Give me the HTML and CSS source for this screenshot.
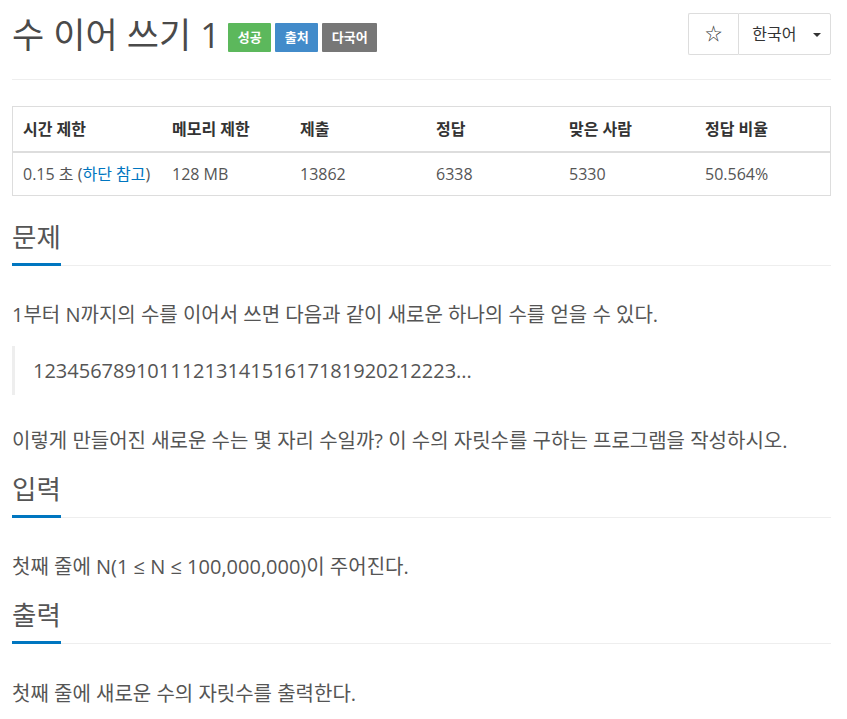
FILE: index.html
```html
<!doctype html>
<html lang="ko">
<head>
    <meta charset="UTF-8">
    <title>수 이어 쓰기 1</title>
    <link rel="stylesheet" href="styles.css">
</head>
<body>
    <div class="container">
        <div class="page-header">
            <h1 class="title">
                <span class="title-text">수 이어 쓰기 1</span>
                <span class="label label-success">성공</span>
                <span class="label label-primary">출처</span>
                <span class="label label-default">다국어</span>
            </h1>
            <div class="btn-group">
                <button class="btn btn-star">&#9734;</button>
                <button class="btn btn-lang">한국어 <span class="caret"></span></button>
            </div>
        </div>

        <table class="problem-info">
            <thead>
                <tr>
                    <th>시간 제한</th>
                    <th>메모리 제한</th>
                    <th>제출</th>
                    <th>정답</th>
                    <th>맞은 사람</th>
                    <th>정답 비율</th>
                </tr>
            </thead>
            <tbody>
                <tr>
                    <td>0.15 초 (<a href="#">하단 참고</a>)</td>
                    <td>128 MB</td>
                    <td>13862</td>
                    <td>6338</td>
                    <td>5330</td>
                    <td>50.564%</td>
                </tr>
            </tbody>
        </table>

        <section class="problem-section">
            <div class="headline"><h2>문제</h2></div>
            <div class="problem-text">
                <p>1부터 N까지의 수를 이어서 쓰면 다음과 같이 새로운 하나의 수를 얻을 수 있다.</p>
                <blockquote>1234567891011121314151617181920212223...</blockquote>
                <p>이렇게 만들어진 새로운 수는 몇 자리 수일까? 이 수의 자릿수를 구하는 프로그램을 작성하시오.</p>
            </div>
        </section>

        <section class="problem-section">
            <div class="headline"><h2>입력</h2></div>
            <div class="problem-text">
                <p>첫째 줄에 N(1 &le; N &le; 100,000,000)이 주어진다.</p>
            </div>
        </section>

        <section class="problem-section">
            <div class="headline"><h2>출력</h2></div>
            <div class="problem-text">
                <p>첫째 줄에 새로운 수의 자릿수를 출력한다.</p>
            </div>
        </section>
    </div>
</body>
</html>
```

FILE: styles.css
```css
body {
    margin: 0;
    background-color: #fff;
    color: #555;
    font: 15px/1.42857 "Open Sans", "Noto Sans CJK KR", sans-serif;
}

.container {
    padding: 0 16px 0 12px;
}

.page-header {
    display: flex;
    justify-content: space-between;
    align-items: flex-start;
    padding-top: 13px;
    height: 66px;
    border-bottom: 1px solid #eee;
    margin-bottom: 26px;
}

.title {
    margin: 0;
    padding-top: 2px;
    display: flex;
    align-items: center;
    font-size: 35px;
    font-weight: 400;
    line-height: 40px;
    color: #4a4a4a;
}

.title-text {
    margin-right: 8px;
}

.label {
    display: inline-block;
    height: 29px;
    line-height: 29px;
    margin-right: 4px;
    margin-top: 4px;
    font-size: 13px;
    font-weight: 700;
    text-align: center;
    color: #fff;
    border-radius: 1px;
    box-sizing: border-box;
}

.label-success {
    background-color: #5cb85c;
    width: 43px;
}

.label-primary {
    background-color: #428bca;
    width: 43px;
}

.label-default {
    background-color: #777;
    width: 55px;
}

.btn-group {
    display: flex;
    height: 42px;
}

.btn {
    font: inherit;
    background: #fff;
    border: 1px solid #ddd;
    color: #333;
    height: 42px;
    margin: 0;
    cursor: pointer;
}

.btn-star {
    width: 50px;
    font-size: 17px;
    border-right: 0;
    border-radius: 2px 0 0 2px;
}

.btn-lang {
    width: 93px;
    font-size: 16px;
    border-radius: 0 2px 2px 0;
    padding: 0 0 0 4px;
}

.caret {
    display: inline-block;
    width: 0;
    height: 0;
    margin-left: 12px;
    vertical-align: middle;
    border-top: 4px solid #333;
    border-left: 4px solid transparent;
    border-right: 4px solid transparent;
}

.problem-info {
    width: 100%;
    border-collapse: collapse;
    border: 1px solid #ddd;
    table-layout: fixed;
    margin-bottom: 24px;
}

.problem-info th,
.problem-info td {
    text-align: left;
    padding: 0 10px;
    font-size: 16px;
    color: #333;
    white-space: nowrap;
}

.problem-info th {
    height: 44px;
    font-weight: 700;
    border-bottom: 2px solid #ddd;
}

.problem-info td {
    height: 42px;
    color: #555;
}

.problem-info th:nth-child(1) { width: 129px; }
.problem-info th:nth-child(2) { width: 108px; }
.problem-info th:nth-child(3) { width: 116px; }
.problem-info th:nth-child(4) { width: 113px; }
.problem-info th:nth-child(5) { width: 116px; }

a {
    color: #0076c0;
    text-decoration: none;
}

.headline {
    border-bottom: 1px solid #eee;
    margin-bottom: 34px;
}

.headline h2 {
    display: inline-block;
    margin: 0 0 -1px;
    padding-bottom: 9px;
    font-size: 26.5px;
    font-weight: 400;
    line-height: 34px;
    color: #555;
    border-bottom: 3px solid #0076c0;
}

.problem-text p {
    margin: 0 0 16px;
    font-size: 20px;
    line-height: 30px;
}

.problem-text blockquote {
    margin: 0 0 31px;
    padding: 10px 18px;
    border-left: 3px solid #eee;
    font-size: 20px;
    line-height: 29px;
}

.problem-section:last-child .headline {
    margin-bottom: 35px;
}
```
